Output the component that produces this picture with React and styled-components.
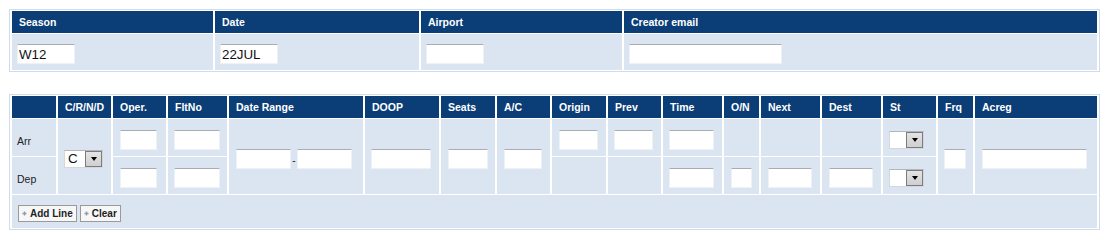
import React from "react";
import styled, { createGlobalStyle } from "styled-components";

const GlobalStyle = createGlobalStyle`
  * {
    box-sizing: border-box;
  }
  body {
    margin: 0;
    background: #fff;
    font-family: "Liberation Sans", Arial, sans-serif;
  }
`;

const HEADER_BLUE = "#0b3e77";
const BODY_BLUE = "#dae5f1";
const FRAME = "#cfdcec";

const columns = [
  { label: "", w: 44 },
  { label: "C/R/N/D", w: 53 },
  { label: "Oper.", w: 53 },
  { label: "FltNo", w: 59 },
  { label: "Date Range", w: 134 },
  { label: "DOOP", w: 74 },
  { label: "Seats", w: 54 },
  { label: "A/C", w: 53 },
  { label: "Origin", w: 54 },
  { label: "Prev", w: 53 },
  { label: "Time", w: 59 },
  { label: "O/N", w: 35 },
  { label: "Next", w: 59 },
  { label: "Dest", w: 59 },
  { label: "St", w: 53 },
  { label: "Frq", w: 35 },
  { label: "Acreg", w: 122 },
];

const topColumns = [
  { label: "Season", w: 201, value: "W12", field: 58 },
  { label: "Date", w: 204, value: "22JUL", field: 58 },
  { label: "Airport", w: 201, value: "", field: 58 },
  { label: "Creator email", w: 473, value: "", field: 153 },
];

class App extends React.Component {
  render() {
    return (
      <>
        <GlobalStyle />
        <Page>
          {/* 시즌 / 날짜 / 공항 / 작성자 */}
          <Grid>
            <thead>
              <tr>
                {topColumns.map((c) => (
                  <HeadCell key={c.label} $w={c.w}>
                    {c.label}
                  </HeadCell>
                ))}
              </tr>
            </thead>
            <tbody>
              <Row $h={36}>
                {topColumns.map((c) => (
                  <Cell key={c.label} $pad={5}>
                    <Field $w={c.field} defaultValue={c.value} />
                  </Cell>
                ))}
              </Row>
            </tbody>
          </Grid>

          {/* 스케줄 라인 */}
          <Grid>
            <thead>
              <tr>
                {columns.map((c, i) => (
                  <HeadCell key={i} $w={c.w}>
                    {c.label}
                  </HeadCell>
                ))}
              </tr>
            </thead>
            <tbody>
              <Row $h={37}>
                <Cell $pad={5}>
                  <Label>Arr</Label>
                </Cell>
                <Cell rowSpan={2} $pad={6}>
                  <Select $w={39} value="C" />
                </Cell>
                <Cell>
                  <Field $w={37} />
                </Cell>
                <Cell $pad={6}>
                  <Field $w={46} />
                </Cell>
                <Cell rowSpan={2}>
                  <DateRange>
                    <Field $w={55} />
                    <Dash>-</Dash>
                    <Field $w={55} />
                  </DateRange>
                </Cell>
                <Cell rowSpan={2} $pad={6}>
                  <Field $w={60} />
                </Cell>
                <Cell rowSpan={2}>
                  <Field $w={40} />
                </Cell>
                <Cell rowSpan={2}>
                  <Field $w={38} />
                </Cell>
                <Cell>
                  <Field $w={39} />
                </Cell>
                <Cell $pad={6}>
                  <Field $w={39} />
                </Cell>
                <Cell $pad={6}>
                  <Field $w={45} />
                </Cell>
                <Cell />
                <Cell />
                <Cell />
                <Cell $pad={6}>
                  <Select $w={35} value="" />
                </Cell>
                <Cell rowSpan={2} $pad={6}>
                  <Field $w={22} />
                </Cell>
                <Cell rowSpan={2}>
                  <Field $w={105} />
                </Cell>
              </Row>
              <Row $h={37}>
                <Cell $pad={5}>
                  <Label>Dep</Label>
                </Cell>
                <Cell>
                  <Field $w={37} />
                </Cell>
                <Cell $pad={6}>
                  <Field $w={46} />
                </Cell>
                <Cell />
                <Cell />
                <Cell $pad={6}>
                  <Field $w={45} />
                </Cell>
                <Cell>
                  <Field $w={21} />
                </Cell>
                <Cell>
                  <Field $w={44} />
                </Cell>
                <Cell>
                  <Field $w={44} />
                </Cell>
                <Cell $pad={6}>
                  <Select $w={35} value="" />
                </Cell>
              </Row>
              <Row $h={33}>
                <Cell colSpan={17} $pad={6}>
                  <Actions>
                    <Button>
                      <PlusIcon />
                      Add Line
                    </Button>
                    <Button>
                      <PlusIcon />
                      Clear
                    </Button>
                  </Actions>
                </Cell>
              </Row>
            </tbody>
          </Grid>
        </Page>
      </>
    );
  }
}

const Select = ({ $w, value }) => (
  <SelectBox $w={$w}>
    <SelectValue>{value}</SelectValue>
    <ArrowButton>
      <Arrow />
    </ArrowButton>
  </SelectBox>
);

const PlusIcon = () => (
  <svg width="5" height="5" viewBox="0 0 5 5">
    <path d="M2.5 0.5v4M0.5 2.5h4" stroke="#8b9bb0" strokeWidth="1.4" />
  </svg>
);

const Page = styled.div`
  display: flex;
  flex-direction: column;
  gap: 22px;
  padding: 9px 0 0 9px;
`;

const Grid = styled.table`
  width: 1091px;
  table-layout: fixed;
  border-collapse: separate;
  border-spacing: 2px 1px;
  border: 1px solid ${FRAME};
  background: #fff;
`;

const HeadCell = styled.th`
  width: ${(props) => props.$w}px;
  height: 22px;
  padding: 0 7px;
  background: ${HEADER_BLUE};
  color: #fff;
  font-size: 10.5px;
  font-weight: 700;
  text-align: left;
  vertical-align: middle;
  white-space: nowrap;
`;

const Row = styled.tr`
  height: ${(props) => props.$h}px;
`;

const Cell = styled.td`
  padding: 4px ${(props) => props.$pad ?? 7}px 0;
  background: ${BODY_BLUE};
  vertical-align: middle;
`;

const Label = styled.span`
  font-size: 10.5px;
  color: #222;
`;

const Field = styled.input`
  display: block;
  width: ${(props) => props.$w}px;
  height: 20px;
  padding: 0 1px;
  border: 1px solid #eef2f7;
  border-top-color: #a9adb2;
  background: #fff;
  font-family: "Liberation Sans", Arial, sans-serif;
  font-size: 13.33px;
  color: #111;
  outline: none;
`;

const DateRange = styled.div`
  display: flex;
  align-items: center;
  gap: 1px;
`;

const Dash = styled.span`
  width: 4px;
  padding-top: 3px;
  font-size: 10px;
  color: #222;
  text-align: center;
`;

const SelectBox = styled.span`
  display: flex;
  width: ${(props) => props.$w}px;
  height: 18px;
  background: #fff;
  border: 1px solid #d4d8dd;
  border-top-color: #b3b6ba;
`;

const SelectValue = styled.span`
  flex: 1;
  padding-left: 3px;
  font-size: 13.33px;
  line-height: 16px;
  color: #111;
`;

const ArrowButton = styled.span`
  display: flex;
  align-items: center;
  justify-content: center;
  width: 17px;
  border: 1px solid #7c7c7c;
  background: linear-gradient(#e4e4e4, #cfcfcf);
`;

const Arrow = styled.span`
  width: 0;
  height: 0;
  border-left: 3.5px solid transparent;
  border-right: 3.5px solid transparent;
  border-top: 4px solid #000;
`;

const Actions = styled.div`
  display: flex;
  gap: 3px;
`;

const Button = styled.button`
  display: flex;
  align-items: center;
  gap: 3px;
  height: 17px;
  padding: 0 3px;
  border: 1px solid #9a9a9a;
  background: #f7f7f7;
  font-family: "Liberation Sans", Arial, sans-serif;
  font-size: 10px;
  font-weight: 700;
  color: #222;
  cursor: pointer;
`;

export default App;
